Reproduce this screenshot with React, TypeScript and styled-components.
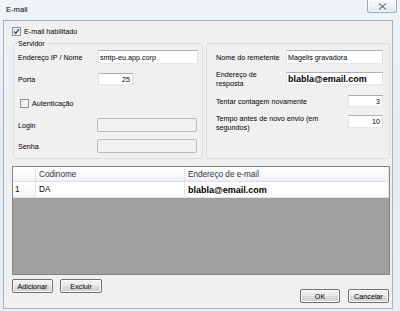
import React from 'react';
import styled, { createGlobalStyle } from 'styled-components';

const Global = createGlobalStyle`
  html, body { margin: 0; padding: 0; }
  body {
    width: 400px; height: 311px; overflow: hidden;
    background: #e4eef5;
    font-family: "Liberation Sans", Arial, sans-serif;
  }
`;

const Window = styled.div`
  width: 400px; height: 311px;
  display: flex; flex-direction: column;
  background: linear-gradient(180deg, #eef4f8 0%, #e3edf4 45%, #e8f0f6 100%);
`;

const TitleBar = styled.div`
  height: 20px; flex-shrink: 0;
  display: flex; align-items: flex-start;
`;

const Title = styled.span`
  flex: 1;
  margin: 5px 0 0 6px;
  font-size: 7.6px; line-height: 9px; color: #000;
`;

const CloseBtn = styled.div`
  width: 30px; height: 13px; margin-right: 3px; box-sizing: border-box;
  border: 1px solid #9eabb8; border-top: none; border-radius: 0 0 3px 3px;
  background: linear-gradient(180deg, #f7fafc 0%, #e9eff4 55%, #dde6ed 100%);
  box-shadow: inset 0 0 0 1px rgba(255,255,255,0.7);
  display: flex; align-items: center; justify-content: center;
`;

const Client = styled.div`
  margin: 0 7px 2px 3px; height: 289px; box-sizing: border-box;
  border: 1px solid #a7b2bc;
  background: #f0f0f0;
  display: flex; flex-direction: column;
  padding: 5px 2px 0 8px;
`;

const CheckRow = styled.label<{ $indent?: number }>`
  display: flex; align-items: center; height: 10px;
  margin-left: ${p => p.$indent ?? 0}px;
  font-size: 7.2px; color: #000;
`;

const Box = styled.span`
  width: 9px; height: 9px; box-sizing: border-box; flex-shrink: 0;
  border: 1px solid #8e8f8f;
  background: linear-gradient(135deg, #dcdcdc 0%, #f6f6f6 70%, #ffffff 100%);
  box-shadow: inset 0 0 0 1px #f4f4f4;
  display: flex; align-items: center; justify-content: center;
  margin-right: 3px;
`;

const GroupsRow = styled.div`
  display: flex; gap: 3px; margin: 7px 0 0 1px;
`;

const Group = styled.div<{ $w: number; $pl: number; $pr?: number }>`
  width: ${p => p.$w}px; height: 116px; box-sizing: border-box;
  border: 1px solid #d5dfe5; border-radius: 3px;
  padding: 0 ${p => p.$pr ?? 0}px 0 ${p => p.$pl}px;
  display: flex; flex-direction: column;
`;

const Legend = styled.span`
  align-self: flex-start;
  margin: -5px 0 0 -1px; padding: 0 1px;
  height: 9px; line-height: 9px;
  background: #f0f0f0;
  font-size: 7.2px; color: #000;
`;

const Field = styled.div<{ $mt: number; $h: number; $top?: boolean }>`
  display: flex; align-items: ${p => (p.$top ? 'flex-start' : 'center')};
  margin-top: ${p => p.$mt}px; height: ${p => p.$h}px;
`;

const Label = styled.span<{ $w: number; $mt?: number }>`
  width: ${p => p.$w}px; flex-shrink: 0;
  margin-top: ${p => p.$mt ?? 0}px;
  font-size: 7.2px; line-height: 9px; color: #000;
`;

const Input = styled.div<{ $w: number; $h: number; $right?: boolean; $big?: boolean; $mt?: number; $auto?: boolean }>`
  width: ${p => p.$w}px; height: ${p => p.$h}px; box-sizing: border-box;
  margin-top: ${p => p.$mt ?? 0}px;
  margin-left: ${p => (p.$auto ? 'auto' : '0')};
  border: 1px solid; border-color: #abadb3 #dbdfe6 #e3e9ef #e2e3ea;
  background: #fff;
  display: flex; align-items: center;
  justify-content: ${p => (p.$right ? 'flex-end' : 'flex-start')};
  padding: 0 2px 0 1px;
  font-size: ${p => (p.$big ? '9px' : '7.2px')};
  font-weight: ${p => (p.$big ? 700 : 400)};
  color: #000; white-space: nowrap; overflow: hidden;
`;

const Disabled = styled.div`
  width: 100px; height: 14px; box-sizing: border-box;
  border: 1px solid #b8bcc0; border-radius: 2px;
  background: #f1f1f1;
`;

const Grid = styled.div`
  margin-top: 7px; height: 109px; width: 378px; box-sizing: border-box;
  border: 1px solid #7f858c;
  background: #a0a0a0;
  display: flex; flex-direction: column;
  font-size: 8.2px; color: #000;
`;

const GridRow = styled.div<{ $head?: boolean }>`
  display: flex; height: ${p => (p.$head ? 14 : 15)}px;
  background: ${p => (p.$head ? 'linear-gradient(180deg, #ffffff 0%, #f7f8fa 60%, #eef0f3 100%)' : '#ffffff')};
  border-bottom: 1px solid ${p => (p.$head ? '#dcdfe3' : '#e2e2e2')};
`;

const Cell = styled.div<{ $w?: number; $rowhead?: boolean; $bold?: boolean }>`
  ${p => (p.$w ? `width: ${p.$w}px; flex-shrink: 0;` : 'flex: 1;')}
  box-sizing: border-box;
  display: flex; align-items: center;
  padding-left: ${p => (p.$rowhead ? 2 : 3)}px;
  border-right: 1px solid #e3e5e8;
  background: ${p => (p.$rowhead ? 'linear-gradient(180deg, #ffffff 0%, #f3f4f6 100%)' : 'transparent')};
  font-size: ${p => (p.$bold ? '9px' : '8.2px')};
  font-weight: ${p => (p.$bold ? 700 : 400)};
  color: ${p => (p.$rowhead ? '#222' : '#000')};
  white-space: nowrap;
`;

const HeadText = styled.span`
  color: #333;
`;

const Footer = styled.div`
  display: flex; height: 24px; margin-top: 4px;
`;

const ButtonGroup = styled.div<{ $end?: boolean; $gap: number }>`
  display: flex; gap: ${p => p.$gap}px;
  align-self: ${p => (p.$end ? 'flex-end' : 'flex-start')};
  margin-left: ${p => (p.$end ? 'auto' : '0')};
  margin-right: ${p => (p.$end ? '1px' : '0')};
`;

const Btn = styled.button<{ $w: number }>`
  width: ${p => p.$w}px; height: 14px; box-sizing: border-box; padding: 0;
  border: 1px solid #707070; border-radius: 2px;
  background: linear-gradient(180deg, #f2f2f2 0%, #ebebeb 48%, #dddddd 52%, #cfcfcf 100%);
  box-shadow: inset 0 0 0 1px #fbfbfb;
  font-family: "Liberation Sans", Arial, sans-serif;
  font-size: 7.2px; color: #000;
  display: flex; align-items: center; justify-content: center;
`;

const Check = () => (
  <svg width="7" height="7" viewBox="0 0 7 7">
    <path d="M1 3.6 L2.8 5.5 L6 1.2" fill="none" stroke="#2b4a8c" strokeWidth="1.3" />
  </svg>
);

export default function App() {
  return (
    <>
      <Global />
      <Window>
        <TitleBar>
          <Title>E-mail</Title>
          <CloseBtn>
            <svg width="9" height="7" viewBox="0 0 9 7">
              <path d="M1 0.5 L8 6.5 M8 0.5 L1 6.5" stroke="#ffffff" strokeWidth="2.6" />
              <path d="M1 0.5 L8 6.5 M8 0.5 L1 6.5" stroke="#6e7780" strokeWidth="1.2" />
            </svg>
          </CloseBtn>
        </TitleBar>
        <Client>
          <CheckRow>
            <Box><Check /></Box>
            E-mail habilitado
          </CheckRow>
          <GroupsRow>
            <Group $w={190} $pl={4}>
              <Legend>Servidor</Legend>
              <Field $mt={2} $h={14}>
                <Label $w={80}>Endereço IP / Nome</Label>
                <Input $w={100} $h={14}>smtp-eu.app.corp</Input>
              </Field>
              <Field $mt={9} $h={12}>
                <Label $w={80}>Porta</Label>
                <Input $w={35} $h={12} $right>25</Input>
              </Field>
              <Field $mt={13} $h={10}>
                <CheckRow $indent={2}>
                  <Box />
                  Autenticação
                </CheckRow>
              </Field>
              <Field $mt={10} $h={14}>
                <Label $w={79}>Login</Label>
                <Disabled />
              </Field>
              <Field $mt={7} $h={14}>
                <Label $w={79}>Senha</Label>
                <Disabled />
              </Field>
            </Group>
            <Group $w={184} $pl={9} $pr={6}>
              <Field $mt={6} $h={14}>
                <Label $w={70}>Nome do remetente</Label>
                <Input $w={97} $h={14}>Magelis gravadora</Input>
              </Field>
              <Field $mt={6} $h={18} $top>
                <Label $w={70}>Endereço de<br />resposta</Label>
                <Input $w={97} $h={13} $mt={2} $big>blabla@email.com</Input>
              </Field>
              <Field $mt={7} $h={12}>
                <Label $w={120}>Tentar contagem novamente</Label>
                <Input $w={35} $h={12} $right $auto>3</Input>
              </Field>
              <Field $mt={8} $h={13} $top>
                <Label $w={125} $mt={-1}>Tempo antes de novo envio (em<br />segundos)</Label>
                <Input $w={35} $h={13} $right $auto>10</Input>
              </Field>
            </Group>
          </GroupsRow>
          <Grid>
            <GridRow $head>
              <Cell $w={23} $rowhead />
              <Cell $w={149}><HeadText>Codinome</HeadText></Cell>
              <Cell><HeadText>Endereço de e-mail</HeadText></Cell>
            </GridRow>
            <GridRow>
              <Cell $w={23} $rowhead>1</Cell>
              <Cell $w={149}>DA</Cell>
              <Cell $bold>blabla@email.com</Cell>
            </GridRow>
          </Grid>
          <Footer>
            <ButtonGroup $gap={7}>
              <Btn $w={41}>Adicionar</Btn>
              <Btn $w={42}>Excluir</Btn>
            </ButtonGroup>
            <ButtonGroup $end $gap={8}>
              <Btn $w={40}>OK</Btn>
              <Btn $w={41}>Cancelar</Btn>
            </ButtonGroup>
          </Footer>
        </Client>
      </Window>
    </>
  );
}
